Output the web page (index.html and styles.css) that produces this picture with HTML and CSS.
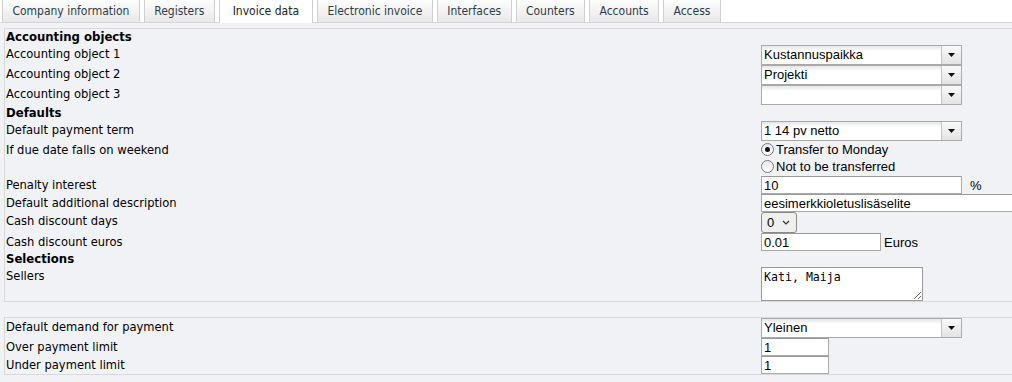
FILE: index.html
```html
<!DOCTYPE html>
<html lang="en">
<head>
    <meta charset="UTF-8">
    <title>Invoice data</title>
    <link rel="stylesheet" href="styles.css">
</head>
<body>
    <ul class="tabs">
        <li class="tab">Company information</li>
        <li class="tab">Registers</li>
        <li class="tab active">Invoice data</li>
        <li class="tab">Electronic invoice</li>
        <li class="tab">Interfaces</li>
        <li class="tab">Counters</li>
        <li class="tab">Accounts</li>
        <li class="tab">Access</li>
    </ul>

    <div class="page">
        <div class="panel">
            <div class="row head"><div class="label">Accounting objects</div></div>
            <div class="row">
                <div class="label">Accounting object 1</div>
                <div class="field">
                    <span class="combo"><span class="combo-text">Kustannuspaikka</span><span class="combo-btn"><svg width="7" height="4" viewBox="0 0 7 4"><path d="M0 0h7L3.5 4z" fill="#111"/></svg></span></span>
                </div>
            </div>
            <div class="row">
                <div class="label">Accounting object 2</div>
                <div class="field">
                    <span class="combo"><span class="combo-text">Projekti</span><span class="combo-btn"><svg width="7" height="4" viewBox="0 0 7 4"><path d="M0 0h7L3.5 4z" fill="#111"/></svg></span></span>
                </div>
            </div>
            <div class="row">
                <div class="label">Accounting object 3</div>
                <div class="field">
                    <span class="combo"><span class="combo-text"></span><span class="combo-btn"><svg width="7" height="4" viewBox="0 0 7 4"><path d="M0 0h7L3.5 4z" fill="#111"/></svg></span></span>
                </div>
            </div>

            <div class="row head"><div class="label">Defaults</div></div>
            <div class="row">
                <div class="label">Default payment term</div>
                <div class="field">
                    <span class="combo"><span class="combo-text">1 14 pv netto</span><span class="combo-btn"><svg width="7" height="4" viewBox="0 0 7 4"><path d="M0 0h7L3.5 4z" fill="#111"/></svg></span></span>
                </div>
            </div>
            <div class="row">
                <div class="label">If due date falls on weekend</div>
                <div class="field radios">
                    <label class="radio"><span class="dot checked"></span>Transfer to Monday</label>
                    <label class="radio"><span class="dot"></span>Not to be transferred</label>
                </div>
            </div>
            <div class="row spaced">
                <div class="label">Penalty interest</div>
                <div class="field">
                    <input class="text w200" type="text" value="10"><span class="unit pct">%</span>
                </div>
            </div>
            <div class="row">
                <div class="label">Default additional description</div>
                <div class="field">
                    <input class="text wide" type="text" value="eesimerkkioletuslisäselite">
                </div>
            </div>
            <div class="row">
                <div class="label">Cash discount days</div>
                <div class="field">
                    <span class="mini-select">0<svg width="8" height="5" viewBox="0 0 8 5"><path d="M1 1l3 3 3-3" fill="none" stroke="#333" stroke-width="1.2"/></svg></span>
                </div>
            </div>
            <div class="row">
                <div class="label">Cash discount euros</div>
                <div class="field">
                    <input class="text w120" type="text" value="0.01"><span class="unit">Euros</span>
                </div>
            </div>

            <div class="row head"><div class="label">Selections</div></div>
            <div class="row">
                <div class="label">Sellers</div>
                <div class="field">
                    <textarea class="sellers">Kati, Maija</textarea>
                </div>
            </div>
        </div>

        <div class="panel second">
            <div class="row">
                <div class="label">Default demand for payment</div>
                <div class="field">
                    <span class="combo"><span class="combo-text">Yleinen</span><span class="combo-btn"><svg width="7" height="4" viewBox="0 0 7 4"><path d="M0 0h7L3.5 4z" fill="#111"/></svg></span></span>
                </div>
            </div>
            <div class="row">
                <div class="label">Over payment limit</div>
                <div class="field">
                    <input class="text w68" type="text" value="1">
                </div>
            </div>
            <div class="row">
                <div class="label">Under payment limit</div>
                <div class="field">
                    <input class="text w68" type="text" value="1">
                </div>
            </div>
        </div>
    </div>
</body>
</html>
```

FILE: styles.css
```css
html, body {
    margin: 0;
    padding: 0;
    overflow: hidden;
}

body {
    background: #fff;
    font-family: "DejaVu Sans Condensed", "DejaVu Sans", sans-serif;
    font-size: 12.8px;
    color: #000;
}

/* tab strip */
.tabs {
    list-style: none;
    margin: 0;
    padding: 0 0 0 2px;
    display: flex;
    gap: 4px;
    height: 22px;
    border-bottom: 1px solid #d6d6d6;
    font-size: 12px;
}

.tab {
    height: 22px;
    line-height: 22px;
    padding: 0 9.4px;
    color: #2f3b4a;
    background: linear-gradient(#fdfdfd, #e8e8e8);
    border-left: 1px solid #d0d0d0;
    border-right: 1px solid #d0d0d0;
    box-sizing: border-box;
}

.tab.active {
    background: #fff;
    height: 23px;
    padding: 0 13px;
    color: #222;
}

.page {
    background: #f1f2f6;
    padding: 5px 0 0 4px;
    height: 400px;
}

.panel {
    border: 1px solid #d9d9dd;
    border-right: none;
    padding: 0 0 0 1px;
}

.panel.second {
    margin-top: 15px;
}

.row {
    display: grid;
    grid-template-columns: 755px 1fr;
    line-height: 17px;
}

.row.head .label {
    font-weight: bold;
    font-size: 13px;
    line-height: 16px;
}

.row.spaced {
    padding-top: 1px;
}

.field {
    display: flex;
    align-items: center;
    align-self: start;
}

/* old style combo */
.combo {
    display: flex;
    width: 201px;
    height: 20px;
    box-sizing: border-box;
    border: 1px solid #a9a9a9;
    background: linear-gradient(#e6e6e6, #fff 5px, #fff);
    font-family: "Liberation Sans", Arial, sans-serif;
    font-size: 13px;
    line-height: 18px;
}

.combo-text {
    flex: 1;
    padding-left: 2px;
}

.combo-btn {
    width: 19px;
    border-left: 1px solid #c4c4c4;
    background: linear-gradient(#fafafa, #e3e3e3);
    display: flex;
    align-items: center;
    justify-content: center;
}

.text {
    height: 18px;
    box-sizing: border-box;
    border: 1px solid #aaa;
    border-top-color: #999;
    padding: 0 2px;
    margin: 0;
    font-family: "Liberation Sans", Arial, sans-serif;
    font-size: 13px;
    background: #fff;
    color: #000;
}

.w200 { width: 201px; }
.w120 { width: 120px; }
.w68 { width: 68px; }
.wide { width: 300px; }

.unit {
    font-family: "Liberation Sans", Arial, sans-serif;
    font-size: 13px;
    margin-left: 3px;
}

.unit.pct {
    margin-left: 8px;
}

.mini-select {
    display: flex;
    align-items: center;
    gap: 8px;
    height: 21px;
    width: 36px;
    box-sizing: border-box;
    padding: 0 0 0 5px;
    font-family: "Liberation Sans", Arial, sans-serif;
    font-size: 13px;
    border: 1px solid #8a8a8a;
    border-radius: 3px;
    background: #efefef;
}

.radios {
    flex-direction: column;
    align-items: flex-start;
}

.radio {
    display: flex;
    align-items: center;
    height: 17px;
    font-family: "Liberation Sans", Arial, sans-serif;
    font-size: 13px;
}

.dot {
    width: 11px;
    height: 11px;
    border: 1px solid #7a7a7a;
    border-radius: 50%;
    background: linear-gradient(#e9e9e9, #fff);
    margin-right: 2px;
    position: relative;
}

.dot.checked::after {
    content: "";
    position: absolute;
    left: 3px;
    top: 3px;
    width: 5px;
    height: 5px;
    border-radius: 50%;
    background: #111;
}

.sellers {
    width: 162px;
    height: 34px;
    box-sizing: border-box;
    margin: 0;
    border: 1px solid #999;
    padding: 2px;
    font-family: "DejaVu Sans Mono", monospace;
    font-size: 11.6px;
    resize: both;
}
```
